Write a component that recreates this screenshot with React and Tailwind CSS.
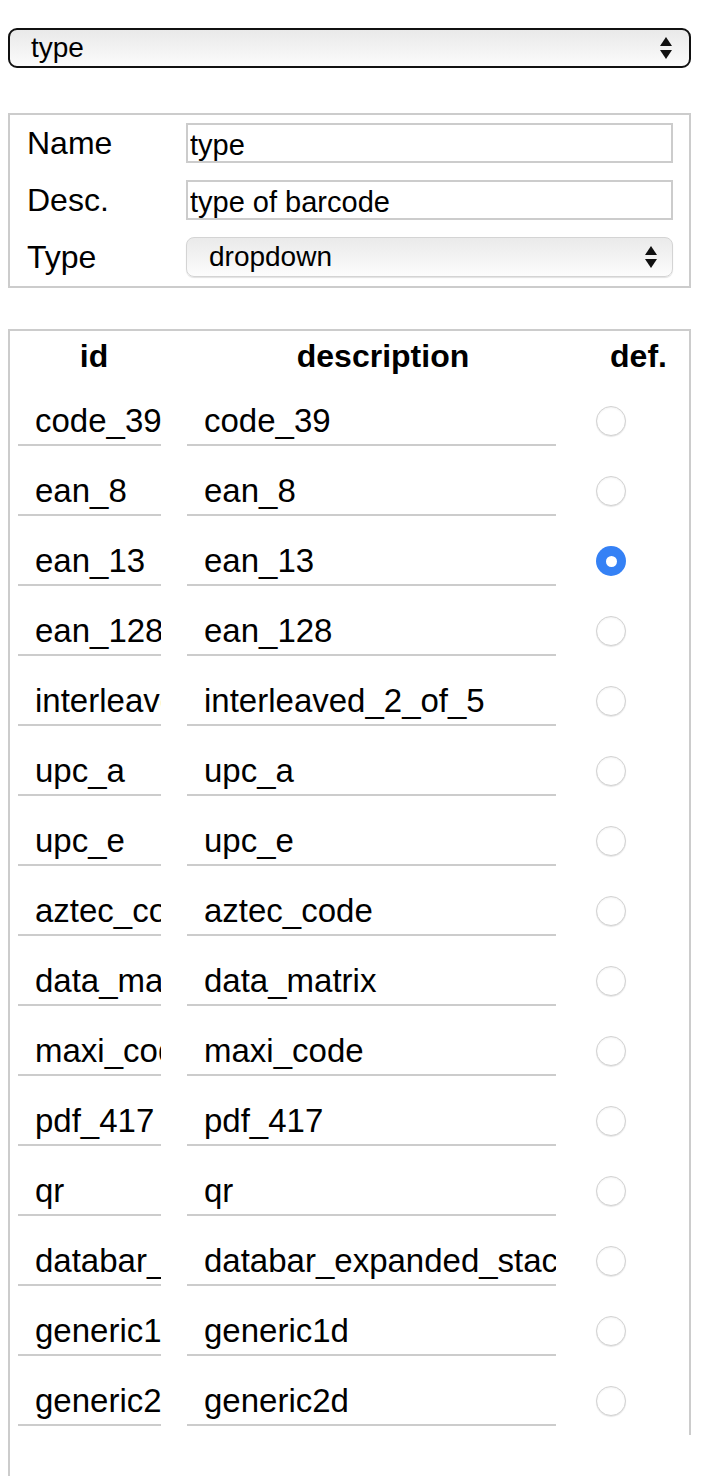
import React from "react";

const ROWS = [
    "code_39",
    "ean_8",
    "ean_13",
    "ean_128",
    "interleaved_2_of_5",
    "upc_a",
    "upc_e",
    "aztec_code",
    "data_matrix",
    "maxi_code",
    "pdf_417",
    "qr",
    "databar_expanded_stacked",
    "generic1d",
    "generic2d",
];

const Arrows = () => (
    <svg width="14" height="24" viewBox="0 0 14 24" className="shrink-0">
        <path d="M7 1 L13 10 L1 10 Z" fill="#111" />
        <path d="M1 14 L13 14 L7 23 Z" fill="#111" />
    </svg>
);

const Radio = ({ checked }) =>
    checked ? (
        <div className="flex h-[30px] w-[30px] items-center justify-center rounded-full bg-[#3581f5]">
            <div className="h-[11px] w-[11px] rounded-full bg-white" />
        </div>
    ) : (
        <div className="h-[30px] w-[30px] rounded-full border border-[#d2d2d2] bg-white shadow-[inset_0_1px_2px_rgba(0,0,0,0.06),0_1px_1px_rgba(0,0,0,0.1)]" />
    );

const FieldRow = ({ label, children }) => (
    <div className="flex h-[40px] items-center">
        <span className="w-[176px] shrink-0 pl-[17px] text-[32px] leading-none">{label}</span>
        {children}
    </div>
);

export default function App() {
    return (
        <div className="min-h-[1476px] bg-white px-2 pt-[28px] text-black" style={{ fontFamily: "'Liberation Sans', Arial, sans-serif" }}>
            {/* field picker */}
            <div className="flex h-[40px] w-[683px] items-center justify-between rounded-[9px] border-2 border-[#111] bg-gradient-to-b from-[#e9e9e9] to-[#fbfbfb] pl-[21px] pr-[16px]">
                <span className="text-[28px] leading-none">type</span>
                <Arrows />
            </div>

            {/* properties */}
            <div className="mt-[45px] flex w-[683px] flex-col gap-[17px] border-2 border-[#cccccc] pb-[9px] pt-[8px]">
                <FieldRow label="Name">
                    <input
                        readOnly
                        value="type"
                        className="h-[40px] w-[487px] border-2 border-[#cccccc] bg-white pl-[2px] pt-[5px] text-[29px] outline-none"
                        style={{ fontFamily: "'Liberation Sans', Arial, sans-serif" }}
                    />
                </FieldRow>
                <FieldRow label="Desc.">
                    <input
                        readOnly
                        value="type of barcode"
                        className="h-[40px] w-[487px] border-2 border-[#cccccc] bg-white pl-[2px] pt-[5px] text-[29px] outline-none"
                        style={{ fontFamily: "'Liberation Sans', Arial, sans-serif" }}
                    />
                </FieldRow>
                <FieldRow label="Type">
                    <div className="flex h-[40px] w-[487px] items-center justify-between rounded-[8px] border border-[#d4d4d4] bg-gradient-to-b from-[#eaeaea] to-[#fcfcfc] pl-[22px] pr-[14px] shadow-[0_1px_1px_rgba(0,0,0,0.12)]">
                        <span className="text-[28px] leading-none">dropdown</span>
                        <Arrows />
                    </div>
                </FieldRow>
            </div>

            {/* options table */}
            <div className="mt-[41px] w-[683px] border-l-2 border-t-2 border-[#cccccc]">
                <div className="border-r-2 border-[#cccccc] pb-[9px]">
                    <div className="grid h-[45px] grid-cols-[168px_410px_1fr] items-start pt-[9px] text-[32px] font-bold leading-[32px]">
                        <div className="text-center">id</div>
                        <div className="text-center">description</div>
                        <div className="text-center">def.</div>
                    </div>
                    {ROWS.map((r) => (
                        <div key={r} className="grid h-[70px] grid-cols-[168px_410px_1fr] items-end">
                            <div className="pl-[8px]">
                                <input
                                    readOnly
                                    value={r}
                                    className="h-[50px] w-[143px] border-b-2 border-[#cccccc] bg-white pl-[17px] pr-0 pt-[2px] text-[33px] outline-none"
                                    style={{ fontFamily: "'Liberation Sans', Arial, sans-serif" }}
                                />
                            </div>
                            <div className="pl-[9px]">
                                <input
                                    readOnly
                                    value={r}
                                    className="h-[50px] w-[369px] border-b-2 border-[#cccccc] bg-white pl-[17px] pr-0 pt-[2px] text-[33px] outline-none"
                                    style={{ fontFamily: "'Liberation Sans', Arial, sans-serif" }}
                                />
                            </div>
                            <div className="flex h-[50px] items-center pl-[8px]">
                                <Radio checked={r === "ean_13"} />
                            </div>
                        </div>
                    ))}
                </div>
                <div className="h-[60px]" />
            </div>
        </div>
    );
}
